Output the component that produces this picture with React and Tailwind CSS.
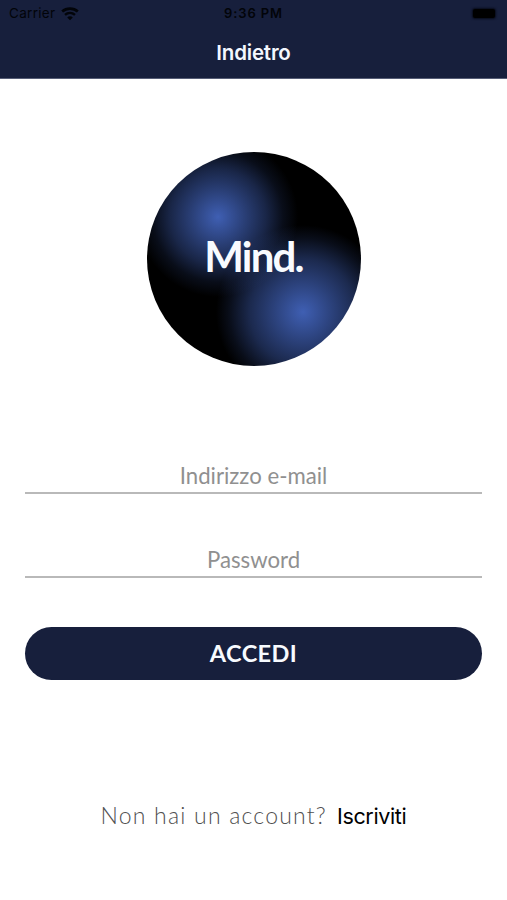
function WifiIcon() {
  return (
    <svg viewBox="0 0 18 14" className="h-[14px] w-[18px]" fill="none" stroke="#020409">
      <path d="M1.200 4.600C5.600.700 12.400.700 16.800 4.600" strokeWidth="2.700" />
      <path d="M4 7.800C6.900 5.300 11.100 5.300 14 7.800" strokeWidth="2.400" />
      <path d="M9 13.200L6.200 10.400C7.800 9 10.200 9 11.800 10.400Z" fill="#020409" stroke="none" />
    </svg>
  );
}

function Header() {
  return (
    <header className="h-[79px] border-b border-[#565d76] bg-[#171f3c] font-['Inter',sans-serif]">
      <div className="grid h-[27px] grid-cols-3 items-center pr-[12px] pl-[9px] text-[#020409]">
        <div className="flex items-center gap-[6px]">
          <span className="text-[13.5px] leading-none tracking-[0.3px]">Carrier</span>
          <WifiIcon />
        </div>
        <span className="pl-[3px] text-center text-[13px] leading-none font-semibold tracking-[0.9px] whitespace-nowrap">9:36 PM</span>
        <span className="h-[9px] w-[22px] justify-self-end rounded-[2px] bg-black shadow-[0_0_2px_1px_#080c1a]" />
      </div>
      <h1 className="h-[50px] text-center text-[20.5px] leading-[51px] font-semibold tracking-[-0.2px] text-[#f4f7ff]">Indietro</h1>
    </header>
  );
}

function Logo() {
  return (
    <div className="mx-auto mt-[73px] flex size-[214px] items-center justify-center rounded-full bg-black bg-[radial-gradient(circle_at_71px_65px,#3f5fb3_0px,#3f5fb3a8_27px,#3f5fb366_48px,#3f5fb324_65px,#3f5fb300_80px),radial-gradient(circle_at_156px_160px,#3f5fb3_0px,#3f5fb3b0_29px,#3f5fb370_53px,#3f5fb324_74px,#3f5fb300_87px)] pb-[7px]">
      <span className="font-['Lato',sans-serif] text-[42px] leading-none font-bold tracking-[-1.8px] text-[#f8fbff]">Mind.</span>
    </div>
  );
}

function Field({ type, label }) {
  return (
    <input
      type={type}
      placeholder={label}
      aria-label={label}
      className="block h-[34px] w-full border-b-2 border-[#b9b9b9] pb-[1px] text-center font-['Lato',sans-serif] text-[22.200px] leading-none outline-none placeholder:text-[#909090] placeholder:opacity-100"
    />
  );
}

export default function App() {
  return (
    <div className="flex h-[900px] w-[507px] flex-col overflow-hidden bg-white">
      <Header />
      <Logo />
      <form className="mt-[94px] flex flex-col px-[25px]">
        <div className="flex flex-col gap-[50px]">
          <Field type="email" label="Indirizzo e-mail" />
          <Field type="password" label="Password" />
        </div>
        <button type="button" className="mt-[49px] h-[53px] rounded-full bg-[#171f3c] font-['Lato',sans-serif] text-[23.5px] leading-none font-bold tracking-[0.4px] text-[#f8fbff]">
          ACCEDI
        </button>
      </form>
      <p className="mt-[120px] flex items-baseline justify-center gap-[10px] leading-[30px] whitespace-nowrap">
        <span className="font-['Lato',sans-serif] text-[23px] font-light tracking-[1.2px] text-[#505050]">Non hai un account?</span>
        <a className="font-['Inter',sans-serif] text-[21.5px] tracking-[-0.35px] text-black">Iscriviti</a>
      </p>
    </div>
  );
}
